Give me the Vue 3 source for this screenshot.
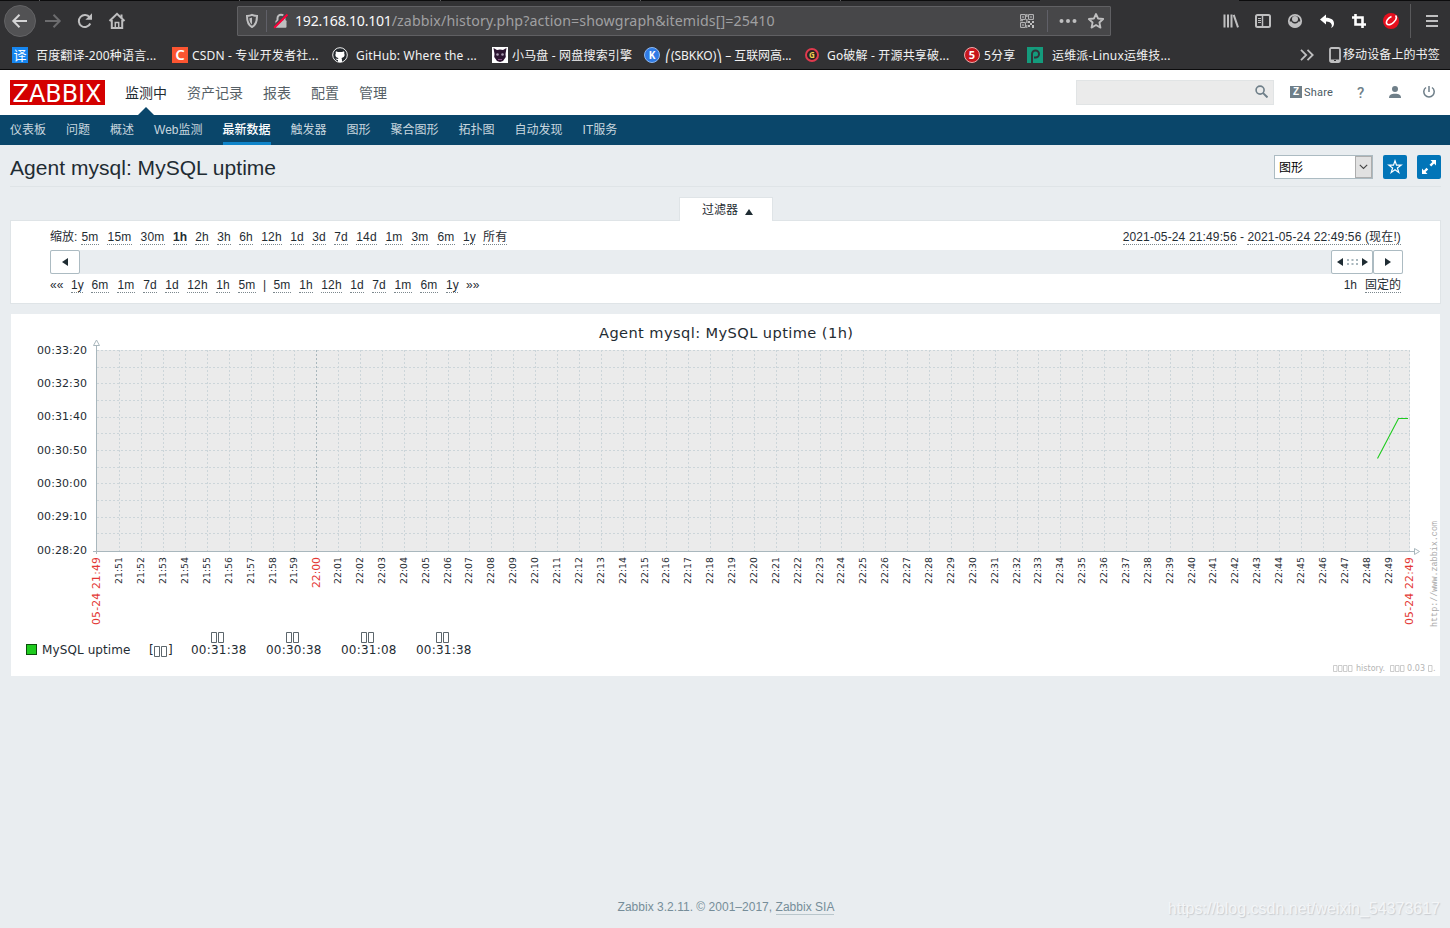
<template>
  <div class="screen">
    <div class="tabs-edge"><i v-for="n in 5" :key="n" /><b /></div>

    <div class="toolbar">
      <div class="nav-btns">
        <span class="back">
          <svg width="18" height="18" viewBox="0 0 18 18"><path d="M16 9H2.500M8.500 2.800 2.300 9l6.200 6.200" class="ln w2" /></svg>
        </span>
        <svg class="dim" width="18" height="18" viewBox="0 0 18 18"><path d="M1 9h14.500M9.500 2.800 15.700 9l-6.200 6.200" class="ln w2" /></svg>
        <svg width="18" height="18" viewBox="0 0 18 18"><path d="M14.300 11.500a6 6 0 1 1-.6-6" class="ln w2" /><path d="M16 1.200v6.600H9.400z" fill="currentColor" /></svg>
        <svg width="18" height="18" viewBox="0 0 18 18"><path d="M1.500 9 9 1.800 16.500 9M3.800 8v8h10.400V8" class="ln w2" /><path d="M7.300 16v-5.500h3.400V16" class="ln w15" /><path d="M12.500 2.500h2v4l-2-2z" fill="currentColor" /></svg>
      </div>
      <div class="urlbar">
        <svg class="shield" width="14" height="16" viewBox="0 0 14 16"><path d="M7 1.800c2 .9 3.600 1.100 5 1.200 0 5.500-1 9-5 11-4-2-5-5.500-5-11 1.400-.1 3-.3 5-1.200z" class="ln w2" /><path d="M7 4.500v7C4.900 9.800 4.500 8 4.400 5.200 5.300 5.100 6.200 4.900 7 4.500z" fill="currentColor" /></svg>
        <i class="sep" />
        <svg class="lock" width="16" height="16" viewBox="0 0 16 16"><path d="M4.500 8V5.200a3.500 3.500 0 0 1 7 0V8" class="ln w2" /><rect x="2.500" y="7.300" width="11" height="7.500" rx="1" fill="currentColor" /><path d="M1.200 13.500 13.500 1.200" stroke="#474749" stroke-width="3" /><path d="M1.200 14.800 14.500 1.500" stroke="#ff0039" stroke-width="2" /></svg>
        <span class="url"><em>192.168.10.101</em>/zabbix/history.php?action=showgraph&amp;itemids[]=25410</span>
        <svg class="qr" width="14" height="14" viewBox="0 0 14 14"><path d="M.6.600h4.800v4.800H.600zM8.600.600h4.800v4.800H8.600zM.6 8.600h4.800v4.800H.600z" class="ln w1" /><path d="M2.300 2.300h1.400v1.400H2.300zM10.300 2.300h1.400v1.400h-1.400zM2.300 10.300h1.400v1.400H2.300zM6.300 0h1.200v3H6.300zM6.300 5h1.200v4H6.300zM8 7h2v2H8zM10 9h2v2h-2zM12 7h2v2h-2zM8 11h2v2H8zM12 11h2v3h-2zM6.300 11h1v3h-1zM0 6.300h3v1H0z" fill="currentColor" /></svg>
        <i class="sep" />
        <svg class="dots" width="18" height="4" viewBox="0 0 18 4"><circle cx="2.500" cy="2" r="2" /><circle cx="9" cy="2" r="2" /><circle cx="15.500" cy="2" r="2" /></svg>
        <svg width="18" height="18" viewBox="0 0 18 18"><path d="m9 2 2.100 4.500 5.100.5-3.800 3.500 1.100 5.100L9 13l-4.500 2.600 1.100-5.100L1.800 7l5.100-.5z" class="ln w18" stroke-linejoin="round" /></svg>
      </div>
      <div class="tools">
        <svg width="16" height="16" viewBox="0 0 16 16"><path d="M1.500 1.500v13M5 1.500v13M8.500 1.500v13M10.700 1.800l4.300 12.500" class="ln w2" /></svg>
        <svg width="16" height="16" viewBox="0 0 16 16"><rect x="1" y="2" width="14" height="12" rx="1.500" class="ln w2" /><path d="M7.500 2v12" class="ln w15" /><path d="M3 5.500h3M3 7.500h3M3 9.500h3" class="ln w1" /></svg>
        <svg width="16" height="16" viewBox="0 0 16 16"><circle cx="8" cy="8" r="6.200" class="ln w18" /><circle cx="8" cy="6" r="3" fill="currentColor" /><path d="M2 8.500h2.500c1.500 2.700 5.500 2.700 7 0H14c0 3.500-2.500 6-6 6s-6-2.500-6-6z" fill="currentColor" /></svg>
        <svg class="lit" width="16" height="16" viewBox="0 0 16 16"><path d="M1 6.500 7 1.500V4.800c5 0 8 2.200 8 5.700 0 2-1 3.500-3 4.500.8-1.200 1-2.200.7-3.200C12 9.200 10 8.500 7 8.500v3z" fill="currentColor" /></svg>
        <svg class="lit" width="16" height="16" viewBox="0 0 16 16"><path d="M4.500 1v10.500H15M1 4.500h10.500V15" fill="none" stroke="currentColor" stroke-width="2.600" /></svg>
        <svg width="16" height="16" viewBox="0 0 16 16"><circle cx="8" cy="8" r="8" fill="#e60f1e" /><path d="M8.500 3.500C5 5 2.500 8.500 3.800 10.800c1.300 1.800 4.500.8 6.700-1.300 2.400-2.300 3.500-5.300 2-7" fill="none" stroke="#fff" stroke-width="1.600" /></svg>
        <i class="tsep" />
        <svg width="14" height="14" viewBox="0 0 14 14"><path d="M1 2h12M1 7h12M1 12h12" class="ln w18" /></svg>
      </div>
    </div>

    <div class="bookmarks">
      <div v-for="b in bookmarks" :key="b.text" class="bm" :style="{ width: b.w + 'px', gap: b.gap + 'px' }">
        <span v-if="b.glyph" class="fav" :class="b.cls">{{ b.glyph }}</span>
        <svg v-else-if="b.cls === 'github'" class="fav" viewBox="0 0 16 16"><circle cx="8" cy="8" r="7.300" fill="#24292e" stroke="#eee" /><path d="M4 4.300 6 5h4l2-.7c.5 1 .4 1.700.2 2.200 1.100 2.200-.2 4-2.700 4.400.5.700.5 2 .5 4H6v-2c-1.500.2-2-.7-2.500-1.400l2.500.5.400-1C4 10.500 2.700 8.700 3.800 6.500 3.500 5.800 3.600 5 4 4.300z" fill="#fff" /></svg>
        <svg v-else-if="b.cls === 'horse'" class="fav" viewBox="0 0 16 16"><path d="M0 0h16v16H0z" fill="#fff" /><path d="M1.500 1 5 3 8 2.500l3 .5 3.500-2-1 6 .3 3-2.800 4-3 1-3-1-2.800-4 .3-3z" fill="#2c1430" /><circle cx="5.500" cy="7.500" r="1.300" fill="#a99bb0" /><circle cx="10.500" cy="7.500" r="1.300" fill="#a99bb0" /><path d="M6 12.500h4" stroke="#84507e" /></svg>
        <svg v-else class="fav" viewBox="0 0 16 16"><path d="M0 0h16v16H0z" fill="#149b7c" /><path d="M5 16V7a3.500 3.500 0 1 1 3.500 3.500H7" fill="none" stroke="#303338" stroke-width="2" /></svg>
        <span :class="{ tight: b.cls === 'sbkko' }">{{ b.text }}</span>
      </div>
      <div class="bm-right">
        <svg width="14" height="12" viewBox="0 0 14 12"><path d="m1 .8 5.200 5.200L1 11.200M7.500.8 12.700 6l-5.200 5.200" class="ln w18" /></svg>
        <svg class="phone" width="12" height="16" viewBox="0 0 12 16"><rect x="1" y="1" width="10" height="14" rx="1.500" class="ln w18" /><path d="M1 13.500h10" class="ln w2" /><path d="M5 13.500h2" stroke="#323234" /></svg>
        <span>移动设备上的书签</span>
      </div>
    </div>

    <header class="header">
      <svg class="logo" width="95" height="25" viewBox="0 0 95 25">
        <rect width="95" height="25" fill="#d40000" />
        <text x="2.500" y="21.500" textLength="89" lengthAdjust="spacingAndGlyphs" fill="#fff" font-size="24">ZABBIX</text>
      </svg>
      <nav class="main-nav">
        <a v-for="(m, i) in mainMenu" :key="m" :class="{ on: i === 0 }">{{ m }}</a>
      </nav>
      <div class="search">
        <svg width="13" height="13" viewBox="0 0 12 12"><circle cx="4.700" cy="4.700" r="3.700" class="ln w15" /><path d="m7.500 7.500 4 4" class="ln w18" /></svg>
      </div>
      <div class="share"><b>Z</b>Share</div>
      <span class="help">?</span>
      <svg class="user" width="12" height="12" viewBox="0 0 12 12"><circle cx="6" cy="3" r="3" fill="currentColor" /><path d="M0 12c0-3 2-4.300 6-4.300s6 1.300 6 4.300z" fill="currentColor" /></svg>
      <svg class="power" width="12" height="12" viewBox="0 0 12 12"><path d="M3 1.500a5.200 5.200 0 1 0 6 0M6 0v6" class="ln w15" /></svg>
    </header>

    <nav class="sub-nav">
      <a v-for="s in subMenu" :key="s" :class="{ on: s === '最新数据' }">{{ s }}</a>
    </nav>

    <main>
      <div class="title-row">
        <h1>Agent mysql: MySQL uptime</h1>
        <div class="select">
          <span>图形</span>
          <i><svg width="9" height="6" viewBox="0 0 9 6"><path d="m.8.800 3.700 3.700L8.200.800" fill="none" stroke="#444" stroke-width="1.100" /></svg></i>
        </div>
        <button class="btn">
          <svg width="16" height="16" viewBox="0 0 16 16"><path d="m8 1.800 1.500 4.400h4.600l-3.700 2.700 1.400 4.500L8 10.700l-3.800 2.700 1.400-4.500L1.900 6.200h4.600z" fill="none" stroke="#fff" stroke-width="1.200" /></svg>
        </button>
        <button class="btn">
          <svg width="14" height="14" viewBox="0 0 14 14"><path d="M8.500 0H14v5.500l-1.900-1.900-2.900 2.900-1.700-1.700 2.900-2.900zM5.500 14H0V8.500l1.900 1.900L4.500 7.800l1.700 1.700-2.600 2.600z" fill="#fff" /></svg>
        </button>
      </div>

      <div class="filter-tab">过滤器 <i class="tri up" /></div>
      <section class="filter">
        <div class="line">
          <span class="lbl">缩放:</span>
          <a v-for="z in zooms" :key="z" :class="{ cur: z === '1h' }" :style="{ width: linkWidth(z) + 'px' }">{{ z }}</a>
          <div class="range dates"><a>2021-05-24 21:49:56</a> - <a>2021-05-24 22:49:56 (现在!)</a></div>
        </div>
        <div class="slider">
          <span class="sbtn"><i class="tri left" /></span>
          <span class="handle"><i class="tri left" /><svg width="11" height="6" viewBox="0 0 11 6"><path d="M0 1h11M0 5h11" stroke="#a9b7bd" stroke-width="2" stroke-dasharray="2 2.500" /></svg><i class="tri right" /></span>
          <span class="sbtn"><i class="tri right" /></span>
        </div>
        <div class="line low">
          <span class="arr">««</span>
          <a v-for="z in stepsBack" :key="z" :style="{ width: linkWidth(z) + 'px' }">{{ z }}</a>
          <span class="bar">|</span>
          <a v-for="z in stepsForward" :key="z" :style="{ width: linkWidth(z) + 'px' }">{{ z }}</a>
          <span class="arr">»»</span>
          <div class="range"><span class="period">1h</span><a>固定的</a></div>
        </div>
      </section>

      <!-- viewBox starts at 11,314 so that the drawing uses window coordinates -->
      <svg class="graph" width="1429" height="362" viewBox="11 314 1429 362">
        <rect x="11" y="314" width="1429" height="362" fill="#fff" />
        <text x="599" y="338" font-size="14.600" textLength="254" class="t">Agent mysql: MySQL uptime (1h)</text>
        <rect x="97" y="350" width="1313" height="201" fill="#ebebeb" />
        <g class="grid">
          <path v-for="y in gridY" :key="'h' + y" :d="`M97 ${y + 0.5}H1410`" />
          <path v-for="(x, i) in gridX" :key="'v' + x" :d="`M${x + 0.5} 350V551`" :class="{ major: i === 9 }" />
          <path d="M1409.500 350V551" />
        </g>
        <path d="M96.500 346v208M93 551.500h1321" class="axis" />
        <path d="M93.500 345.500h6l-3-5.500zM1414.500 548.500v6l5-3z" class="axis tip" />
        <text v-for="(l, i) in yLabels" :key="l" x="37" :y="354 + Math.floor(i * 33.34)" font-size="11" textLength="50" class="t">{{ l }}</text>
        <template v-for="(x, i) in gridX" :key="'t' + x">
          <text v-if="i === 9" :transform="`translate(${x + 4} 588) rotate(-90)`" font-size="10.800" textLength="31" class="red">22:00</text>
          <text v-else :transform="`translate(${x + 3} 584) rotate(-90)`" font-size="9.300" textLength="27" class="t">{{ minute(i) }}</text>
        </template>
        <text transform="translate(100 625) rotate(-90)" font-size="10.800" textLength="68" class="red">05-24 21:49</text>
        <text transform="translate(1413 625) rotate(-90)" font-size="10.800" textLength="68" class="red">05-24 22:49</text>
        <path d="M1377.500 458.500 1398.500 418.500H1408" class="series" />
        <text transform="translate(1437 627) rotate(-90)" font-size="8.400" textLength="106" class="site">http://www.zabbix.com</text>

        <rect x="26.500" y="644.500" width="10" height="10" fill="#1fcb1f" stroke="#0b4f0b" />
        <text x="42" y="654" font-size="12" textLength="88.500" class="t">MySQL uptime</text>
        <text x="149" y="654" font-size="12" class="t">[</text>
        <path d="M154.500 646.500h5v10h-5zM161.500 646.500h5v10h-5z" class="box" />
        <text x="168" y="654" font-size="12" class="t">]</text>
        <g v-for="(v, i) in stats" :key="i">
          <path :d="`M${211.5 + i * 75} 632.500h5v10h-5zM${218.500 + i * 75} 632.500h5v10h-5z`" class="box" />
          <text :x="191 + i * 75" y="654" font-size="12" textLength="55.500" class="t">{{ v }}</text>
        </g>
        <path v-for="x in [1333, 1338, 1343, 1348, 1390, 1395, 1400, 1428]" :key="x" :d="`M${x + 0.500} 665.500h3.500v6h-3.500z`" class="box pale" />
        <text x="1356" y="671" font-size="8" textLength="29" class="foot">history.</text>
        <text x="1407" y="671" font-size="8" textLength="18" class="foot">0.03</text>
        <text x="1433" y="671" font-size="8" class="foot">.</text>
      </svg>
    </main>

    <footer>Zabbix 3.2.11. © 2001–2017, <a>Zabbix SIA</a></footer>
    <div class="watermark">https://blog.csdn.net/weixin_54373617</div>
  </div>
</template>

<script setup>
const bookmarks = [
  { cls: 'fanyi', glyph: '译', text: '百度翻译-200种语言...', w: 160, gap: 8 },
  { cls: 'csdn', glyph: 'C', text: 'CSDN - 专业开发者社...', w: 160, gap: 4 },
  { cls: 'github', text: 'GitHub: Where the ...', w: 160, gap: 8 },
  { cls: 'horse', text: '小马盘 - 网盘搜索引擎', w: 152, gap: 4 },
  { cls: 'sbkko', glyph: 'K', text: '⎛(SBKKO)⎞ – 互联网高...', w: 160, gap: 5 },
  { cls: 'go', glyph: 'G', text: 'Go破解 - 开源共享破...', w: 160, gap: 7 },
  { cls: 'five', glyph: '5', text: '5分享', w: 63, gap: 4 },
  { cls: 'yunwei', text: '运维派-Linux运维技...', w: 160, gap: 9 },
];
const mainMenu = ['监测中', '资产记录', '报表', '配置', '管理'];
const subMenu = ['仪表板', '问题', '概述', 'Web监测', '最新数据', '触发器', '图形', '聚合图形', '拓扑图', '自动发现', 'IT服务'];

const zooms = ['5m', '15m', '30m', '1h', '2h', '3h', '6h', '12h', '1d', '3d', '7d', '14d', '1m', '3m', '6m', '1y', '所有'];
const stepsBack = ['1y', '6m', '1m', '7d', '1d', '12h', '1h', '5m'];
const stepsForward = [...stepsBack].reverse();

const charWidth = { m: 11, y: 5, 所: 12, 有: 12 };
const linkWidth = (s) => [...s].reduce((w, c) => w + (charWidth[c] || 7), 0);

const gridX = Array.from({ length: 59 }, (_, i) => Math.floor(119.85 + i * 21.883));
const gridY = Array.from({ length: 12 }, (_, i) => Math.round(350 + i * 16.67));
const yLabels = ['00:33:20', '00:32:30', '00:31:40', '00:30:50', '00:30:00', '00:29:10', '00:28:20'];
const stats = ['00:31:38', '00:30:38', '00:31:08', '00:31:38'];

function minute(i) {
  const t = 21 * 60 + 51 + i;
  return Math.floor(t / 60) + ':' + String(t % 60).padStart(2, '0');
}
</script>

<style>
body{ background: #e9edf0; overflow: hidden; }
</style>

<style scoped>
.screen{ position: relative; width: 1450px; height: 928px; display: flex; flex-direction: column; overflow: hidden; background: #e9edf0; color: #1f2c33; font: 12px "Liberation Sans", "Noto Sans CJK SC", sans-serif; }
.screen *{ box-sizing: border-box; }
svg{ flex: none; }
.ln{ fill: none; stroke: currentColor; }
.w1{ stroke-width: 1; }
.w15{ stroke-width: 1.5; }
.w18{ stroke-width: 1.8; }
.w2{ stroke-width: 2; }

/* 浏览器 */
.tabs-edge{ flex: none; height: 1px; display: flex; background: #0c0c0d; padding-left: 39px; }
.tabs-edge i{ width: 200.3px; border-left: 1px solid #5a5a5c; }
.tabs-edge b{ width: 199px; background: #323234; }
.toolbar{ flex: none; height: 41px; display: flex; align-items: center; background: #323234; color: #bfbfc0; padding: 0 11px 2px 4px; }
.nav-btns{ width: 233px; display: flex; align-items: center; gap: 14px; }
.nav-btns .back{ width: 32px; height: 32px; border-radius: 50%; background: #525254; border: 1px solid #636365; display: flex; align-items: center; justify-content: center; color: #d5d5d6; margin-right: -6px; }
.dim{ color: #6c6c6e; }
.urlbar{ width: 874px; height: 30px; display: flex; align-items: center; background: #474749; border: 1px solid #606063; border-radius: 1px; padding: 0 5px 0 7px; }
.shield{ margin-right: 7px; }
.sep{ width: 1px; height: 22px; background: #606068; }
.lock{ margin: 0 6px; }
.url{ flex: 1; font: 14.2px "Noto Sans", sans-serif; color: #a0a0a2; white-space: nowrap; letter-spacing: .12px; }
.url em{ font-style: normal; color: #f9f9fa; letter-spacing: -.29px; }
.qr{ margin-right: 13px; }
.dots{ margin: 0 10px 0 11px; fill: #bfbfc0; }
.tools{ display: flex; align-items: center; gap: 16px; margin-left: auto; padding-left: 1px; }
.lit{ color: #fff; }
.tsep{ width: 1px; height: 34px; background: #59595b; margin: 0 -2px 0 -5px; }
.bookmarks{ flex: none; height: 28px; display: flex; align-items: center; background: #323234; border-bottom: 1px solid #0c0c0d; padding: 0 10px 1px 12px; color: #f2f2f3; font: 12px "Noto Sans", "Noto Sans CJK SC", sans-serif; letter-spacing: .17px; white-space: nowrap; }
.bm{ flex: none; display: flex; align-items: center; }
.tight{ letter-spacing: -.05px; }
.fav{ flex: none; width: 16px; height: 16px; text-align: center; line-height: 16px; color: #fff; font-size: 13px; letter-spacing: 0; }
.fanyi{ background: #1686f0; }
.csdn{ background: #fc5531; font-size: 15px; font-weight: 600; line-height: 15px; }
.sbkko{ background: #2f7be5; border: 1px solid #8db7ef; border-radius: 50%; font-size: 10px; font-weight: bold; line-height: 14px; }
.go{ width: 14px; height: 14px; margin: 0 1px; background: #292323; border: 2px solid #e03a4e; border-radius: 50%; font-size: 8px; font-weight: bold; line-height: 10px; color: #efcf50; }
.five{ background: #c8161c; border: 1px solid #eda9a9; border-radius: 50%; font-size: 11px; font-weight: bold; line-height: 14px; }
.bm-right{ margin-left: auto; display: flex; align-items: center; color: #bfbfc0; }
.bm-right span{ width: 97px; color: #f2f2f3; letter-spacing: .1px; line-height: 16px; }
.phone{ margin: 0 2px 0 15px; }

/* 顶部菜单 */
.header{ flex: none; height: 45px; display: flex; align-items: center; background: #fff; padding: 0 15px 0 10px; color: #6f7f89; }
.logo{ overflow: visible; }
.logo text{ font-family: "DejaVu Sans", sans-serif; }
.main-nav{ display: flex; gap: 20px; margin-left: 20px; height: 45px; font-size: 14px; line-height: 47px; color: #565f66; }
.main-nav .on{ position: relative; height: 45px; color: #1f2c33; }
.main-nav .on::after{ content: ""; position: absolute; left: 13px; bottom: 0; border: 8px solid transparent; border-top: 0; border-bottom-color: #0a466a; }
.search{ width: 198px; height: 25px; margin-left: auto; background: #ebebeb; border: 1px solid #e1e4e5; display: flex; align-items: center; justify-content: flex-end; padding: 0 5px 2px 0; }
.share{ display: flex; align-items: center; gap: 2px; margin-left: 16px; padding-bottom: 1px; font: 11px Roboto, sans-serif; letter-spacing: .2px; color: #4d5c65; width: 67px; }
.share b{ width: 12px; height: 12px; background: #6f7f89; color: #fff; font: bold 10px/12px "Liberation Sans", sans-serif; text-align: center; letter-spacing: 0; }
.help{ width: 7px; font: 500 15px Roboto, sans-serif; }
.user{ margin: 0 0 1px 25px; }
.power{ margin: 0 0 1px 22px; }
.sub-nav{ flex: none; height: 30px; display: flex; gap: 20px; padding-left: 10px; background: #0a466a; color: #c8d6df; line-height: 31px; }
.sub-nav a{ height: 30px; }
.sub-nav .on{ color: #fff; font-weight: 500; border-bottom: 3px solid #0f84c9; }

/* 标题 */
main{ padding: 0 9px 0 10px; }
.title-row{ height: 42px; display: flex; align-items: center; border-bottom: 1px solid #dfe4e7; padding-top: 3px; }
h1{ flex: 1; margin: 0; padding-top: 2px; font-size: 21px; font-weight: normal; letter-spacing: .03px; line-height: 24px; }
.select{ width: 99px; height: 24px; border: 1px solid #acbbc2; background: #fff; display: flex; align-items: center; padding-left: 4px; color: #000; }
.select span{ padding-bottom: 1px; }
.select i{ margin-left: auto; width: 17px; height: 22px; background: #e1e1e1; border: 1px solid #adadad; display: flex; align-items: center; justify-content: center; }
.btn{ width: 24px; height: 24px; margin-left: 10px; padding: 0; border: 0; border-radius: 2px; background: #0275b8; display: flex; align-items: center; justify-content: center; }

/* 过滤器 */
.filter-tab{ position: relative; z-index: 1; width: 94px; height: 24px; margin: 10px auto -1px 669px; padding: 0 0 2px 3px; background: #fff; border: 1px solid #dfe4e7; border-bottom: 0; display: flex; align-items: center; justify-content: center; gap: 7px; }
.tri{ border: 4px solid transparent; }
.tri.up{ border-width: 0 4px 6px; border-bottom-color: #1f2c33; margin-top: 6px; }
.tri.left{ border-width: 4px 6px 4px 0; border-right-color: #1f2c33; }
.tri.right{ border-width: 4px 0 4px 6px; border-left-color: #1f2c33; }
.filter{ height: 84px; background: #fff; border: 1px solid #dfe4e7; padding: 9px 37px 0 39px; }
.line{ height: 20px; display: flex; gap: 8px; align-items: flex-start; line-height: 14px; white-space: nowrap; }
.line a{ flex: none; display: inline-block; height: 15px; text-align: center; letter-spacing: .2px; border-bottom: 1px dotted #7b878d; }
.line .lbl{ width: 23px; }
.line .cur{ font-weight: bold; }
.line .range{ margin-left: auto; padding-right: 2px; }
.line .range a{ letter-spacing: 0; }
.line .dates a{ letter-spacing: .14px; }
.slider{ height: 24px; display: flex; background: #e9edf0; }
.sbtn, .handle{ width: 30px; height: 24px; background: #fff; border: 1px solid #acbbc2; border-radius: 2px; display: flex; align-items: center; justify-content: center; gap: 3px; }
.handle{ width: 42px; margin-left: auto; gap: 4px; }
.low{ padding-top: 4px; }
.arr{ width: 13px; line-height: 15px; }
.bar{ width: 1px; margin-left: -1px; margin-right: 1px; }
.period{ margin-right: 8px; }
.graph{ display: block; margin: 10px 0 0 1px; font-family: "DejaVu Sans", sans-serif; }
.t{ fill: #1f2c33; }
.red{ fill: #e33734; }
.grid path{ stroke: #ccd5d9; stroke-dasharray: 2 2; }
.grid .major{ stroke: #a9b7bd; }
.axis{ fill: none; stroke: #a9b7bd; }
.tip{ fill: #fff; }
.series{ fill: none; stroke: #1fcb1f; stroke-width: 1.1; }
.site{ font-family: "Liberation Mono", monospace; fill: #aaa; }
.box{ fill: none; stroke: #4a555b; stroke-width: .9; }
.pale{ stroke: #c0c0c0; stroke-width: .8; }
.foot{ fill: #b4b4b4; }

footer{ margin: auto auto 0; height: 29px; padding-left: 2px; color: #768d99; line-height: 17px; letter-spacing: .02px; }
footer a{ display: inline-block; height: 16px; border-bottom: 1px solid #b9c6cc; }
.watermark{ position: absolute; right: 10px; bottom: 9px; font-size: 16px; line-height: 20px; color: #f3f5f7; text-shadow: 1px 1px 1px #c8ccd0; }
</style>
